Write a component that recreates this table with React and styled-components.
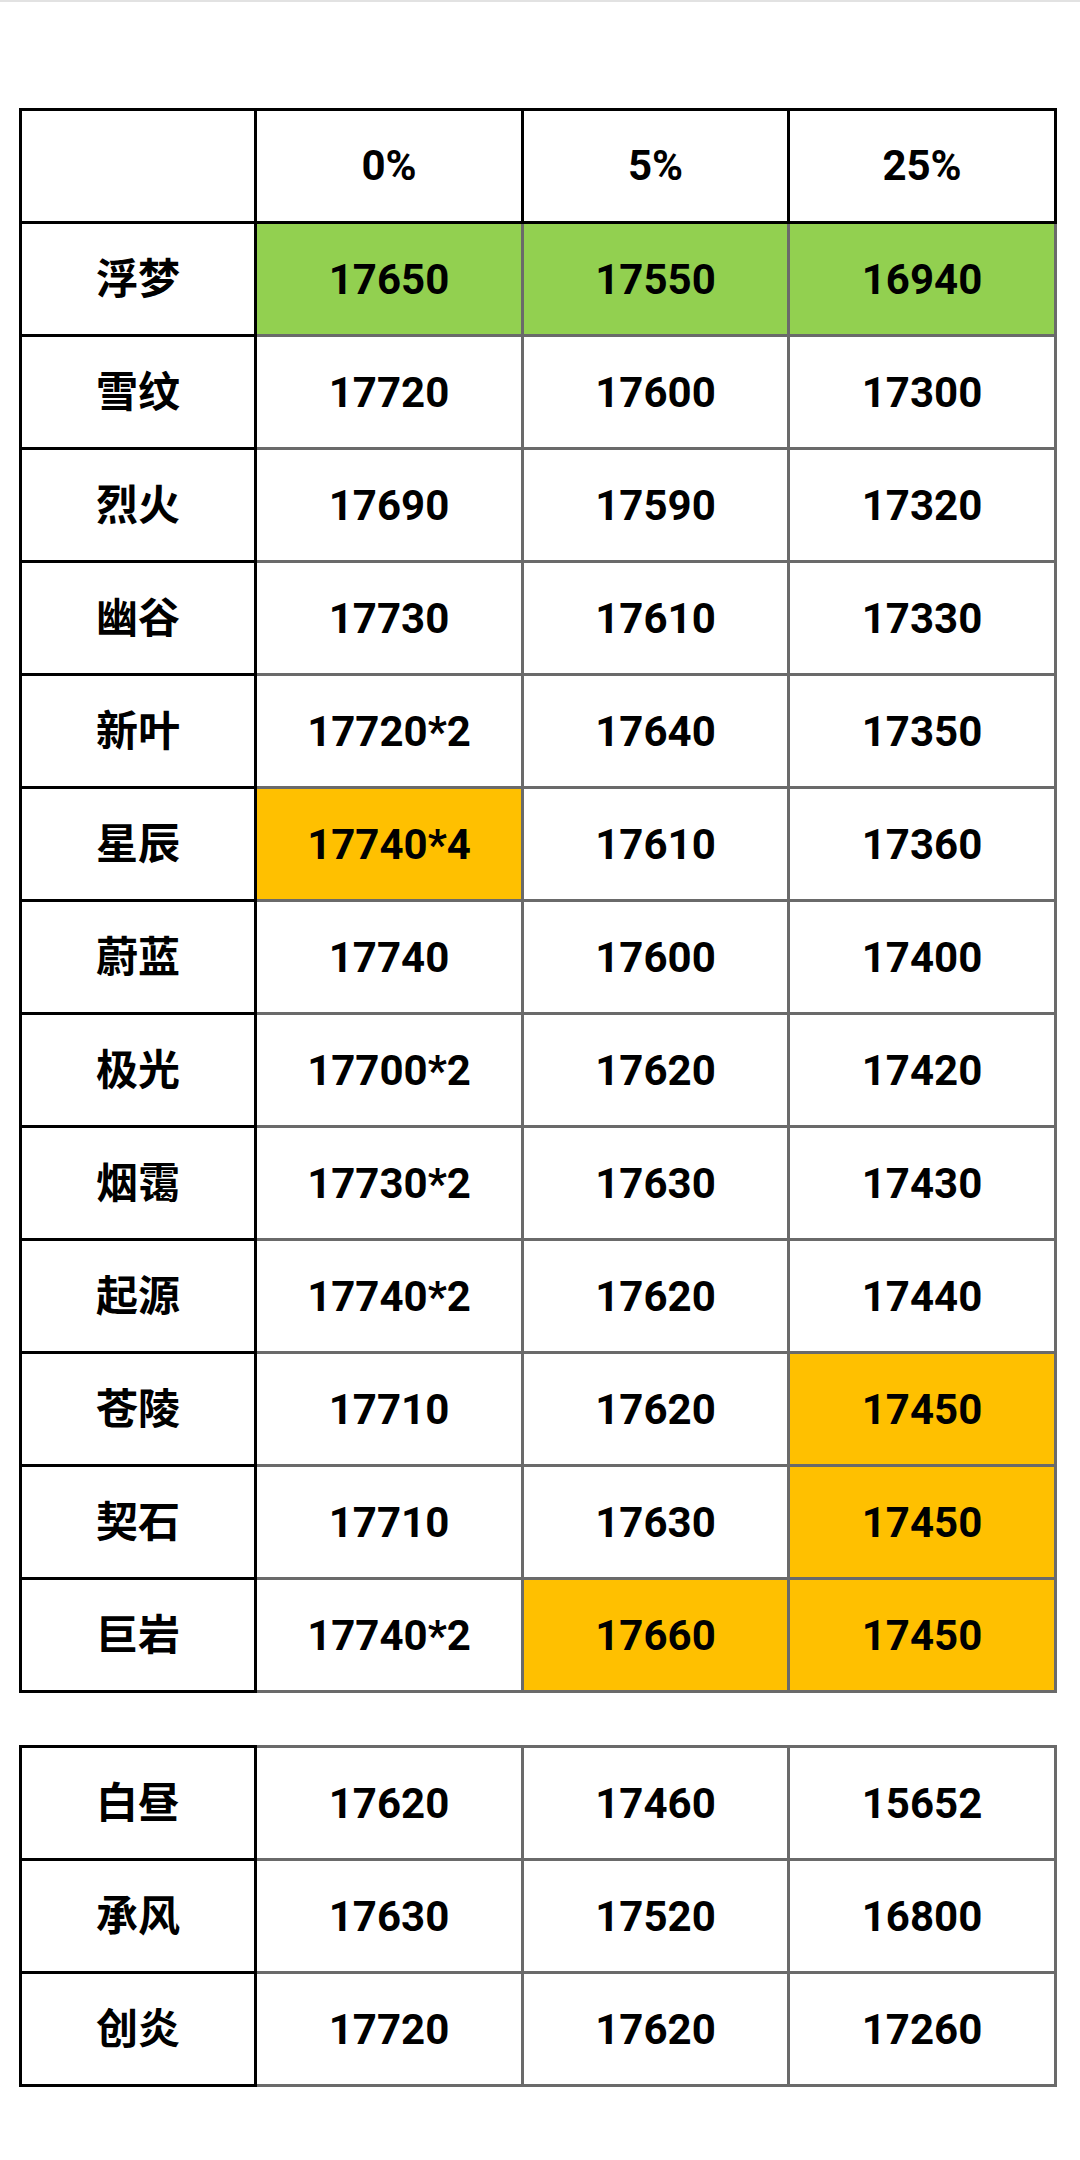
import styled, { createGlobalStyle } from "styled-components";

const MAIN_ROWS = [
  { name: "浮梦", values: ["17650", "17550", "16940"], marks: ["green", "green", "green"] },
  { name: "雪纹", values: ["17720", "17600", "17300"] },
  { name: "烈火", values: ["17690", "17590", "17320"] },
  { name: "幽谷", values: ["17730", "17610", "17330"] },
  { name: "新叶", values: ["17720*2", "17640", "17350"] },
  { name: "星辰", values: ["17740*4", "17610", "17360"], marks: ["gold"] },
  { name: "蔚蓝", values: ["17740", "17600", "17400"] },
  { name: "极光", values: ["17700*2", "17620", "17420"] },
  { name: "烟霭", values: ["17730*2", "17630", "17430"] },
  { name: "起源", values: ["17740*2", "17620", "17440"] },
  { name: "苍陵", values: ["17710", "17620", "17450"], marks: [null, null, "gold"] },
  { name: "契石", values: ["17710", "17630", "17450"], marks: [null, null, "gold"] },
  { name: "巨岩", values: ["17740*2", "17660", "17450"], marks: [null, "gold", "gold"] },
];

const EXTRA_ROWS = [
  { name: "白昼", values: ["17620", "17460", "15652"] },
  { name: "承风", values: ["17630", "17520", "16800"] },
  { name: "创炎", values: ["17720", "17620", "17260"] },
];

const HEADERS = ["0%", "5%", "25%"];

const FILLS = {
  green: "#92d050",
  gold: "#ffc000",
};

// inner height of a row (pitch is 113 with the 3px collapsed border)
const ROW_H = 110;

const GlobalStyle = createGlobalStyle`
  html, body {
    margin: 0;
    padding: 0;
    background: #ffffff;
  }
  body {
    font-family: Roboto, "Noto Sans CJK SC", sans-serif;
    color: #000000;
  }
`;

const Page = styled.div`
  width: 1080px;
  min-height: 2160px;
  box-sizing: border-box;
  border-top: 2px solid #e2e2e2;
  padding: 106px 0 0 19px;
  display: flex;
  flex-direction: column;
  gap: 52px;
`;

const Sheet = styled.table`
  border-collapse: collapse;
  table-layout: fixed;
  width: 1038px;
`;

const Col = styled.col`
  width: ${(p) => p.$w}px;
`;

const Cell = styled.td`
  height: ${ROW_H}px;
  padding: 0;
  border: 3px solid #6a6a6a;
  text-align: center;
  vertical-align: middle;
  font-family: Roboto, "Noto Sans CJK SC", sans-serif;
  font-weight: 700;
  font-size: 42px;
  background: ${(p) => (p.$fill ? FILLS[p.$fill] : "#ffffff")};
`;

const HeadCell = styled(Cell).attrs({ as: "th" })`
  border-color: #000000;
  height: ${ROW_H - 2}px;
  padding-bottom: 2px;
`;

const NameCell = styled(Cell)`
  border-color: #000000;
  font-family: "Noto Sans CJK SC", sans-serif;
  height: ${ROW_H - 8}px;
  padding-bottom: 8px;
`;

function Columns() {
  return (
    <colgroup>
      <Col $w={235} />
      <Col $w={267} />
      <Col $w={266} />
      <Col $w={267} />
    </colgroup>
  );
}

function DataRow({ row }) {
  return (
    <tr>
      <NameCell>{row.name}</NameCell>
      {row.values.map((v, i) => (
        <Cell key={i} $fill={row.marks ? row.marks[i] : null}>
          {v}
        </Cell>
      ))}
    </tr>
  );
}

export default function App() {
  return (
    <>
      <GlobalStyle />
      <Page>
        <Sheet>
          <Columns />
          <thead>
            <tr>
              <HeadCell />
              {HEADERS.map((h) => (
                <HeadCell key={h}>{h}</HeadCell>
              ))}
            </tr>
          </thead>
          <tbody>
            {MAIN_ROWS.map((row) => (
              <DataRow key={row.name} row={row} />
            ))}
          </tbody>
        </Sheet>
        <Sheet>
          <Columns />
          <tbody>
            {EXTRA_ROWS.map((row) => (
              <DataRow key={row.name} row={row} />
            ))}
          </tbody>
        </Sheet>
      </Page>
    </>
  );
}
